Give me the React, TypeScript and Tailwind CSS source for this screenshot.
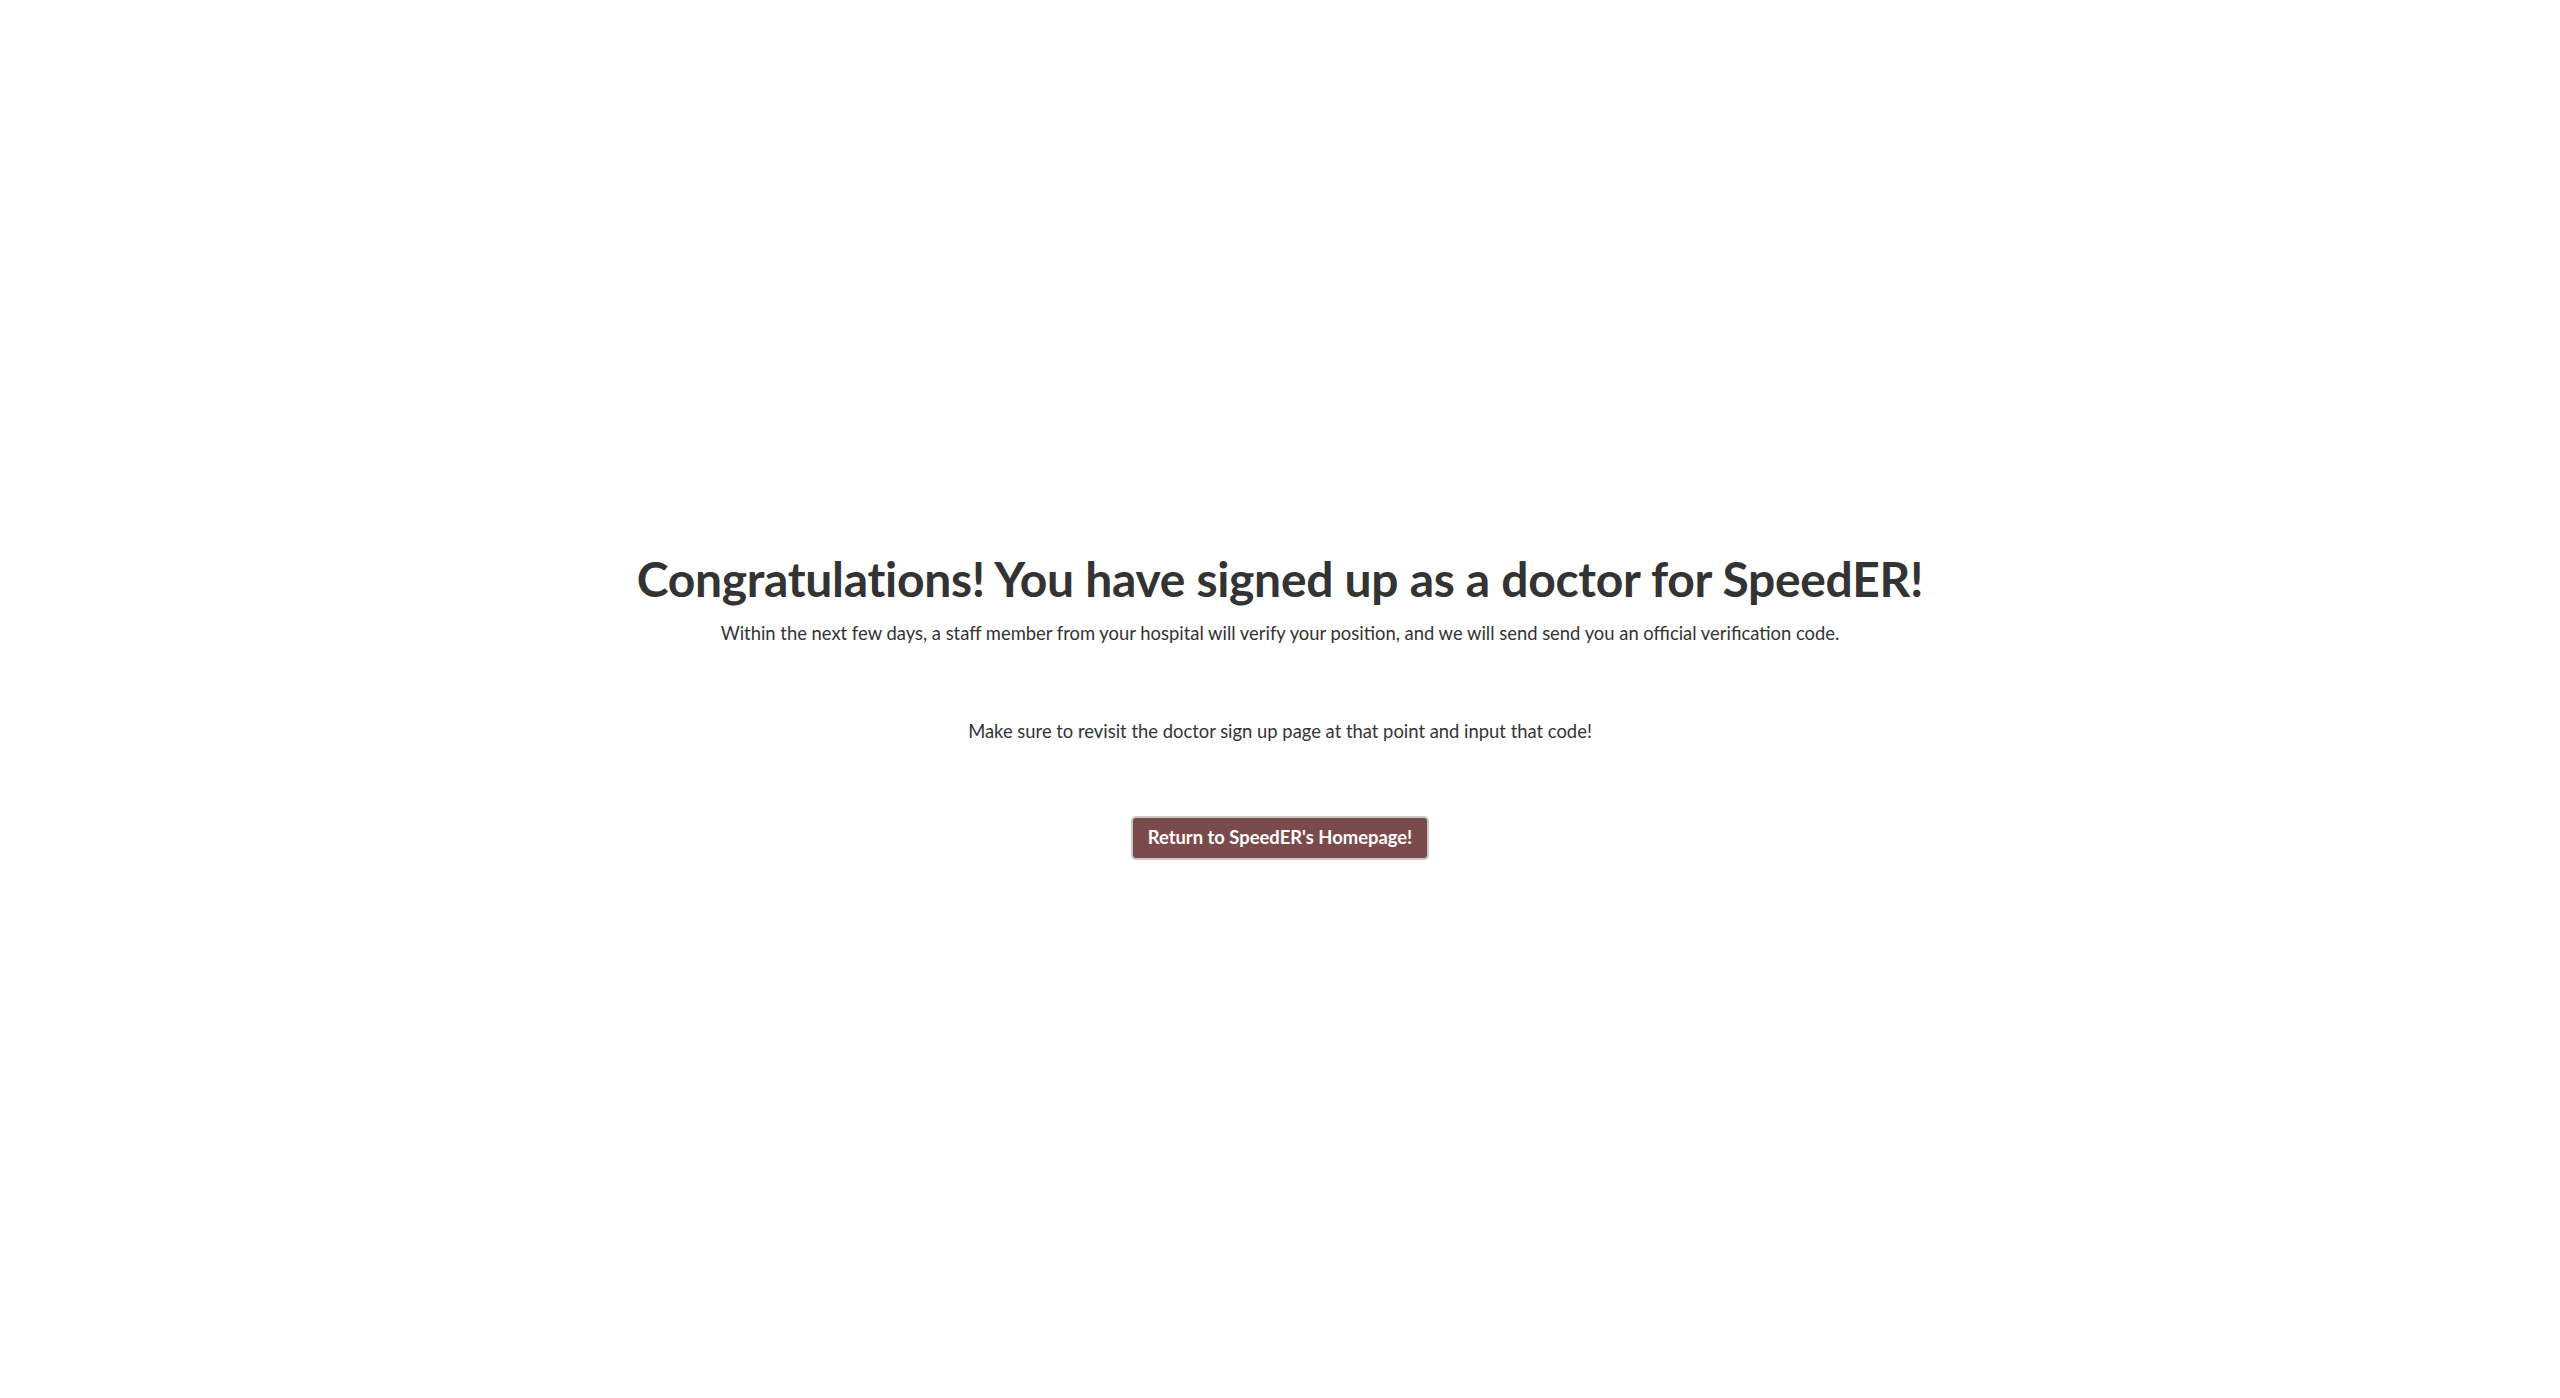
export default function App() {
  return (
    <div
      className="min-h-screen w-full bg-white text-[#333333] flex flex-col items-center pt-[549px]"
      style={{ fontFamily: "Lato, 'Noto Sans', sans-serif" }}
    >
      <h1 className="text-[48px] leading-[60px] font-bold tracking-[-0.3px]">
        Congratulations! You have signed up as a doctor for SpeedER!
      </h1>
      <p className="text-[18.4px] leading-[28px] mt-[10px]">
        Within the next few days, a staff member from your hospital will verify your position, and we will send send you an official verification code.
      </p>
      <p className="text-[18.4px] leading-[28px] mt-[70px]">
        Make sure to revisit the doctor sign up page at that point and input that code!
      </p>
      <button className="mt-[71px] h-[44px] w-[298px] rounded-[5px] bg-[#7b4b4b] border-2 border-[#c8c8c8] text-white text-[18.4px] font-bold">
        Return to SpeedER's Homepage!
      </button>
    </div>
  );
}
